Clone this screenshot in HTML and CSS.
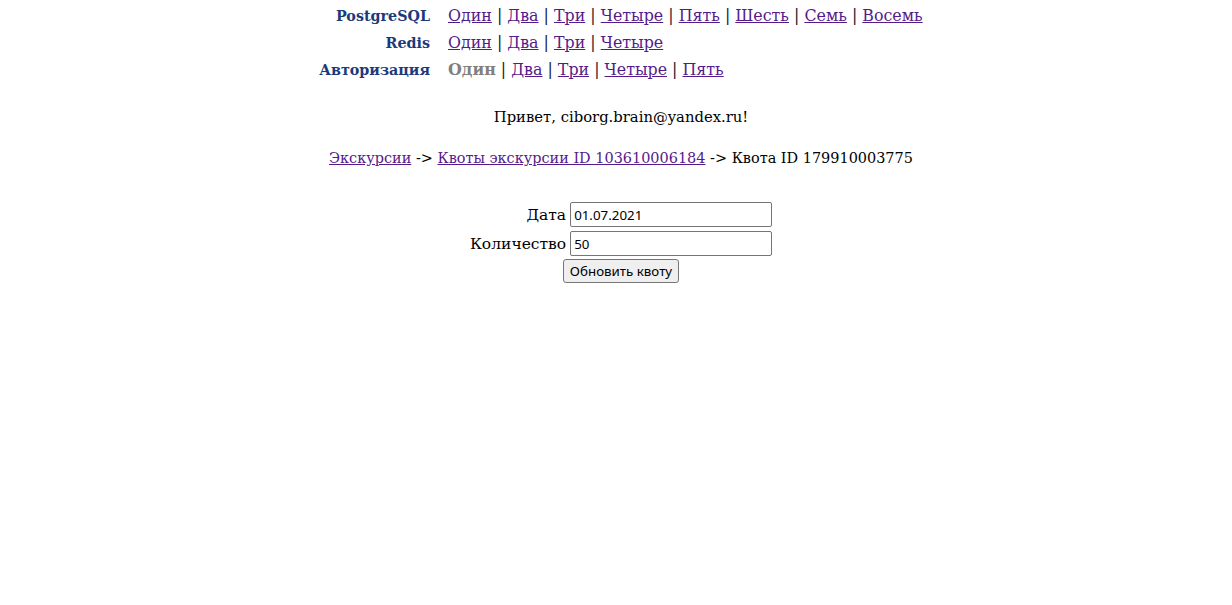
FILE: index.html
```html
<!DOCTYPE html>
<html lang="ru">
<head>
<meta charset="utf-8">
<title>Квота</title>
<link rel="stylesheet" href="styles.css">
</head>
<body>
<table class="nav">
  <tr>
    <th>PostgreSQL</th>
    <td><a href="#">Один</a> | <a href="#">Два</a> | <a href="#">Три</a> | <a href="#">Четыре</a> | <a href="#">Пять</a> | <a href="#">Шесть</a> | <a href="#">Семь</a> | <a href="#">Восемь</a></td>
  </tr>
  <tr>
    <th>Redis</th>
    <td><a href="#">Один</a> | <a href="#">Два</a> | <a href="#">Три</a> | <a href="#">Четыре</a></td>
  </tr>
  <tr>
    <th>Авторизация</th>
    <td><span class="current">Один</span> | <a href="#">Два</a> | <a href="#">Три</a> | <a href="#">Четыре</a> | <a href="#">Пять</a></td>
  </tr>
</table>

<p class="hello">Привет, ciborg.brain@yandex.ru!</p>

<p class="crumbs"><a href="#">Экскурсии</a> -&gt; <a href="#">Квоты экскурсии ID 103610006184</a> -&gt; Квота ID 179910003775</p>

<form class="quota">
  <table class="fields">
    <tr>
      <td class="label">Дата</td>
      <td><input type="text" value="01.07.2021"></td>
    </tr>
    <tr>
      <td class="label">Количество</td>
      <td><input type="text" value="50"></td>
    </tr>
  </table>
  <div class="actions"><button type="button">Обновить квоту</button></div>
</form>
</body>
</html>
```

FILE: styles.css
```css
html, body {
  background: #ffffff;
}
body {
  margin: 0;
  padding: 2px 0 0 10px;
  font-family: "DejaVu Serif", serif;
  font-size: 14.8px;
  color: #000;
}
a {
  color: #551a8b;
}
.nav {
  margin: 0 auto;
  border-collapse: collapse;
  font-size: 15.85px;
}
.nav th {
  text-align: right;
  color: #1c3a7a;
  font-weight: bold;
  font-size: 14.3px;
  padding: 2px 18px 2px 0;
  height: 23px;
}
.nav td {
  text-align: left;
  padding: 2px 0;
  height: 23px;
  color: #1a1a2e;
}
.nav .current {
  color: #808080;
  font-weight: bold;
}
.hello {
  text-align: center;
  margin: 25px 0 0;
}
.crumbs {
  text-align: center;
  font-size: 14.45px;
  margin: 25px 0 0;
}
.quota {
  margin-top: 32px;
}
.fields {
  margin: 0 auto;
  border-collapse: separate;
  border-spacing: 4px;
  font-size: 15.5px;
}
.fields .label {
  text-align: right;
  padding: 0;
}
.fields td {
  padding: 0;
}
.fields input {
  width: 202px;
  height: 25px;
  box-sizing: border-box;
  font-family: "Noto Sans", sans-serif;
  font-size: 13.33px;
  padding: 1px 3px;
  border: 1px solid #767676;
  border-radius: 2px;
  margin: 0;
}
.actions {
  text-align: center;
  margin-top: -1px;
}
.actions button {
  font-family: "Noto Sans", sans-serif;
  font-size: 13.33px;
  padding: 1px 6px;
  height: 24px;
  background: #efefef;
  border: 1px solid #767676;
  border-radius: 3px;
  color: #000;
}
```
